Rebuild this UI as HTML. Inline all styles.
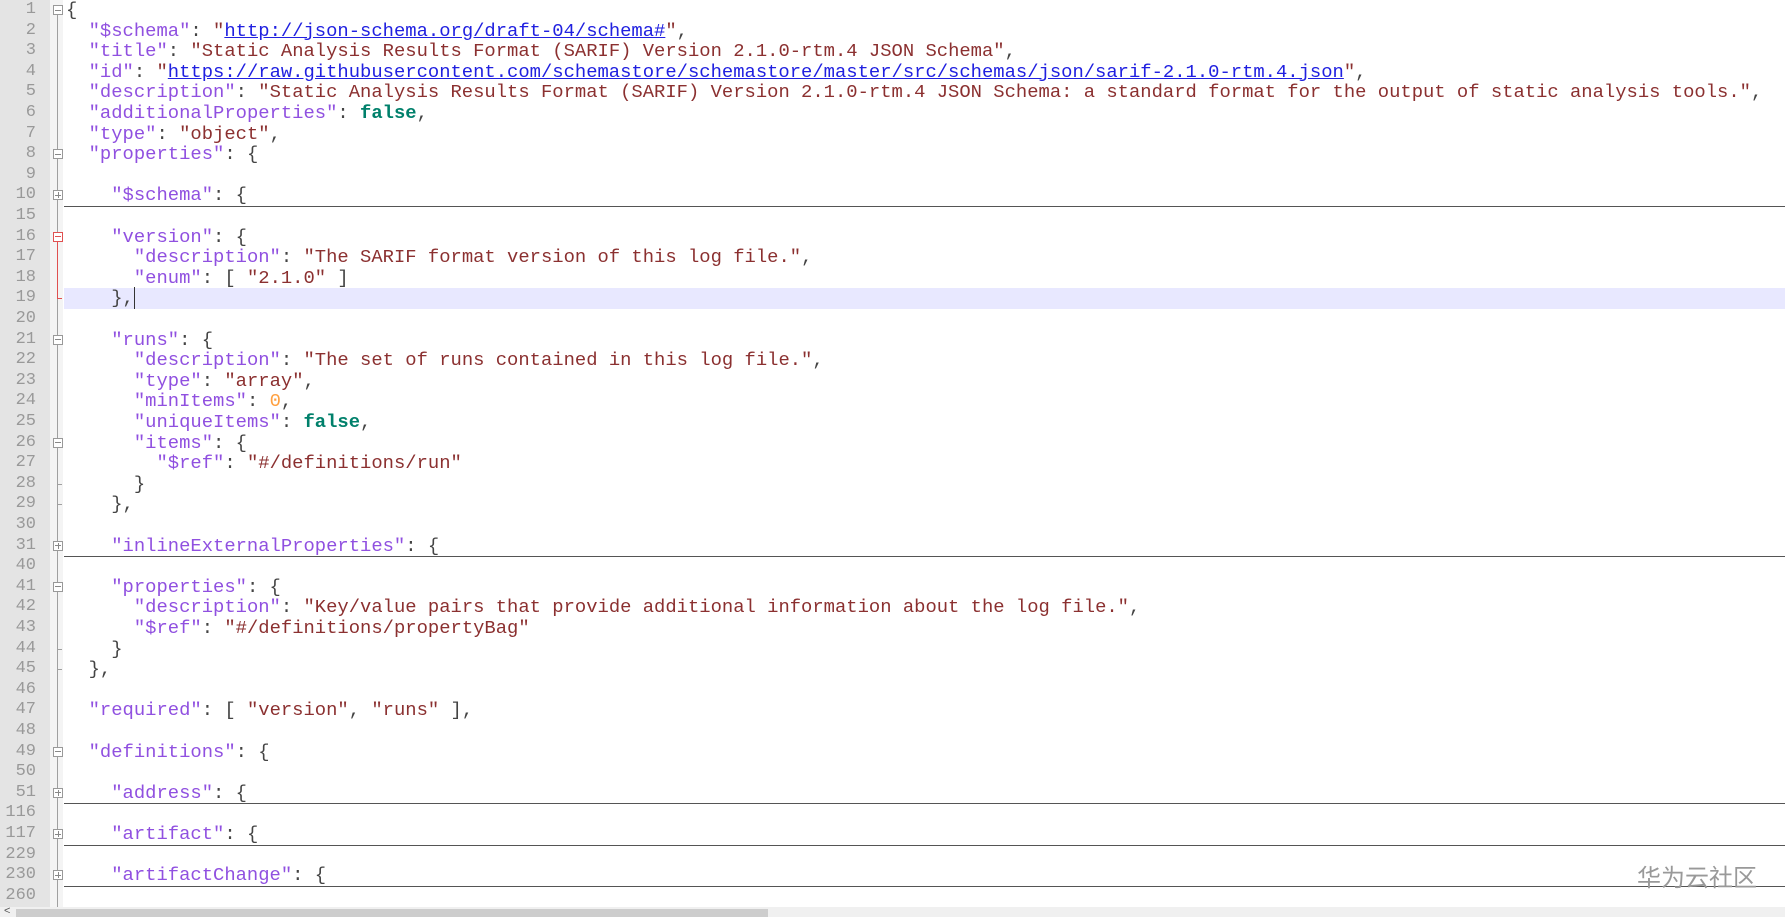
<!DOCTYPE html>
<html><head><meta charset="utf-8"><style>
html,body{margin:0;padding:0;width:1785px;height:917px;overflow:hidden;background:#fff;position:relative}
#g{position:absolute;left:0;top:0;width:50px;height:907px;background:#e4e4e4}
#m{position:absolute;left:50px;top:0;width:13px;height:907px;background:#f4f4f4}
#vl{position:absolute;left:57px;top:12px;width:1px;height:895px;background:#a0a0a0}
.r{position:absolute;left:0;height:20.6px;width:1785px}
.ln{position:absolute;left:0;width:36px;text-align:right;font:17px/20.6px "Liberation Mono",monospace;color:#999}
.t{position:absolute;left:66px;white-space:pre;font:18.85px/20.6px "Liberation Mono",monospace;color:#444}
.k{color:#9050e0}.s{color:#8b3030}.u{color:#2020e0;text-decoration:underline}.b{color:#00806b;font-weight:bold}.n{color:#ffa040}
.fm{position:absolute;left:53px;top:5px;width:8px;height:8px;border:1px solid #999;background:#fff;box-sizing:content-box}
.fm:before{content:"";position:absolute;left:1px;top:3.5px;width:6px;height:1px;background:#888}
.fp:after{content:"";position:absolute;left:3.5px;top:1px;width:1px;height:6px;background:#888}
.red{border-color:#e05050}.red:before{background:#e05050}
.ul{position:absolute;left:64px;right:0;bottom:-1px;height:1px;background:#555}
.tk{position:absolute;left:57px;top:10px;width:5px;height:1px;background:#a0a0a0}
#hl{position:absolute;left:64px;top:288.4px;width:1721px;height:20.6px;background:#e8e8ff}
#red{position:absolute;left:57px;top:238px;width:1px;height:60px;background:#e05050}
#sb{position:absolute;left:0;top:907px;width:1785px;height:10px;background:#f0f0f0}
#th{position:absolute;left:16px;top:909px;width:752px;height:8px;background:#cdcdcd}
#wm{position:absolute;left:1637px;top:858px;font:24px "Noto Sans CJK SC",sans-serif;color:#999}
</style></head><body>
<div id="g"></div><div id="m"></div><div id="vl"></div><div id="hl"></div><div id="red"></div>
<div class="r" style="top:0"><span class="ln">1</span><span class="fm"></span><span class="t">{</span></div>
<div class="r" style="top:20.6px"><span class="ln">2</span><span class="t">  <span class="k">"$schema"</span>: <span class="s">"</span><span class="u">http://json-schema.org/draft-04/schema#</span><span class="s">"</span>,</span></div>
<div class="r" style="top:41.2px"><span class="ln">3</span><span class="t">  <span class="k">"title"</span>: <span class="s">"Static Analysis Results Format (SARIF) Version 2.1.0-rtm.4 JSON Schema"</span>,</span></div>
<div class="r" style="top:61.8px"><span class="ln">4</span><span class="t">  <span class="k">"id"</span>: <span class="s">"</span><span class="u">https://raw.githubusercontent.com/schemastore/schemastore/master/src/schemas/json/sarif-2.1.0-rtm.4.json</span><span class="s">"</span>,</span></div>
<div class="r" style="top:82.4px"><span class="ln">5</span><span class="t">  <span class="k">"description"</span>: <span class="s">"Static Analysis Results Format (SARIF) Version 2.1.0-rtm.4 JSON Schema: a standard format for the output of static analysis tools."</span>,</span></div>
<div class="r" style="top:103px"><span class="ln">6</span><span class="t">  <span class="k">"additionalProperties"</span>: <span class="b">false</span>,</span></div>
<div class="r" style="top:123.6px"><span class="ln">7</span><span class="t">  <span class="k">"type"</span>: <span class="s">"object"</span>,</span></div>
<div class="r" style="top:144.2px"><span class="ln">8</span><span class="fm"></span><span class="t">  <span class="k">"properties"</span>: {</span></div>
<div class="r" style="top:164.8px"><span class="ln">9</span></div>
<div class="r" style="top:185.4px"><span class="ln">10</span><span class="fm fp"></span><span class="t">    <span class="k">"$schema"</span>: {</span><div class="ul"></div></div>
<div class="r" style="top:206px"><span class="ln">15</span></div>
<div class="r" style="top:226.6px"><span class="ln">16</span><span class="fm red"></span><span class="t">    <span class="k">"version"</span>: {</span></div>
<div class="r" style="top:247.2px"><span class="ln">17</span><span class="t">      <span class="k">"description"</span>: <span class="s">"The SARIF format version of this log file."</span>,</span></div>
<div class="r" style="top:267.8px"><span class="ln">18</span><span class="t">      <span class="k">"enum"</span>: [ <span class="s">"2.1.0"</span> ]</span></div>
<div class="r" style="top:288.4px"><span class="ln">19</span><span class="tk" style="background:#e05050"></span><span class="t">    },<span style="border-left:1px solid #333"></span></span></div>
<div class="r" style="top:309px"><span class="ln">20</span></div>
<div class="r" style="top:329.6px"><span class="ln">21</span><span class="fm"></span><span class="t">    <span class="k">"runs"</span>: {</span></div>
<div class="r" style="top:350.2px"><span class="ln">22</span><span class="t">      <span class="k">"description"</span>: <span class="s">"The set of runs contained in this log file."</span>,</span></div>
<div class="r" style="top:370.8px"><span class="ln">23</span><span class="t">      <span class="k">"type"</span>: <span class="s">"array"</span>,</span></div>
<div class="r" style="top:391.4px"><span class="ln">24</span><span class="t">      <span class="k">"minItems"</span>: <span class="n">0</span>,</span></div>
<div class="r" style="top:412px"><span class="ln">25</span><span class="t">      <span class="k">"uniqueItems"</span>: <span class="b">false</span>,</span></div>
<div class="r" style="top:432.6px"><span class="ln">26</span><span class="fm"></span><span class="t">      <span class="k">"items"</span>: {</span></div>
<div class="r" style="top:453.2px"><span class="ln">27</span><span class="t">        <span class="k">"$ref"</span>: <span class="s">"#/definitions/run"</span></span></div>
<div class="r" style="top:473.8px"><span class="ln">28</span><span class="tk"></span><span class="t">      }</span></div>
<div class="r" style="top:494.4px"><span class="ln">29</span><span class="tk"></span><span class="t">    },</span></div>
<div class="r" style="top:515px"><span class="ln">30</span></div>
<div class="r" style="top:535.6px"><span class="ln">31</span><span class="fm fp"></span><span class="t">    <span class="k">"inlineExternalProperties"</span>: {</span><div class="ul"></div></div>
<div class="r" style="top:556.2px"><span class="ln">40</span></div>
<div class="r" style="top:576.8px"><span class="ln">41</span><span class="fm"></span><span class="t">    <span class="k">"properties"</span>: {</span></div>
<div class="r" style="top:597.4px"><span class="ln">42</span><span class="t">      <span class="k">"description"</span>: <span class="s">"Key/value pairs that provide additional information about the log file."</span>,</span></div>
<div class="r" style="top:618px"><span class="ln">43</span><span class="t">      <span class="k">"$ref"</span>: <span class="s">"#/definitions/propertyBag"</span></span></div>
<div class="r" style="top:638.6px"><span class="ln">44</span><span class="tk"></span><span class="t">    }</span></div>
<div class="r" style="top:659.2px"><span class="ln">45</span><span class="tk"></span><span class="t">  },</span></div>
<div class="r" style="top:679.8px"><span class="ln">46</span></div>
<div class="r" style="top:700.4px"><span class="ln">47</span><span class="t">  <span class="k">"required"</span>: [ <span class="s">"version"</span>, <span class="s">"runs"</span> ],</span></div>
<div class="r" style="top:721px"><span class="ln">48</span></div>
<div class="r" style="top:741.6px"><span class="ln">49</span><span class="fm"></span><span class="t">  <span class="k">"definitions"</span>: {</span></div>
<div class="r" style="top:762.2px"><span class="ln">50</span></div>
<div class="r" style="top:782.8px"><span class="ln">51</span><span class="fm fp"></span><span class="t">    <span class="k">"address"</span>: {</span><div class="ul"></div></div>
<div class="r" style="top:803.4px"><span class="ln">116</span></div>
<div class="r" style="top:824px"><span class="ln">117</span><span class="fm fp"></span><span class="t">    <span class="k">"artifact"</span>: {</span><div class="ul"></div></div>
<div class="r" style="top:844.6px"><span class="ln">229</span></div>
<div class="r" style="top:865.2px"><span class="ln">230</span><span class="fm fp"></span><span class="t">    <span class="k">"artifactChange"</span>: {</span><div class="ul"></div></div>
<div class="r" style="top:885.8px"><span class="ln">260</span></div>
<div id="wm">华为云社区</div>
<div id="sb"></div><div id="th"></div>
<div style="position:absolute;left:4px;top:905px;font:11px 'Liberation Sans',sans-serif;color:#555">&lt;</div>
</body></html>
